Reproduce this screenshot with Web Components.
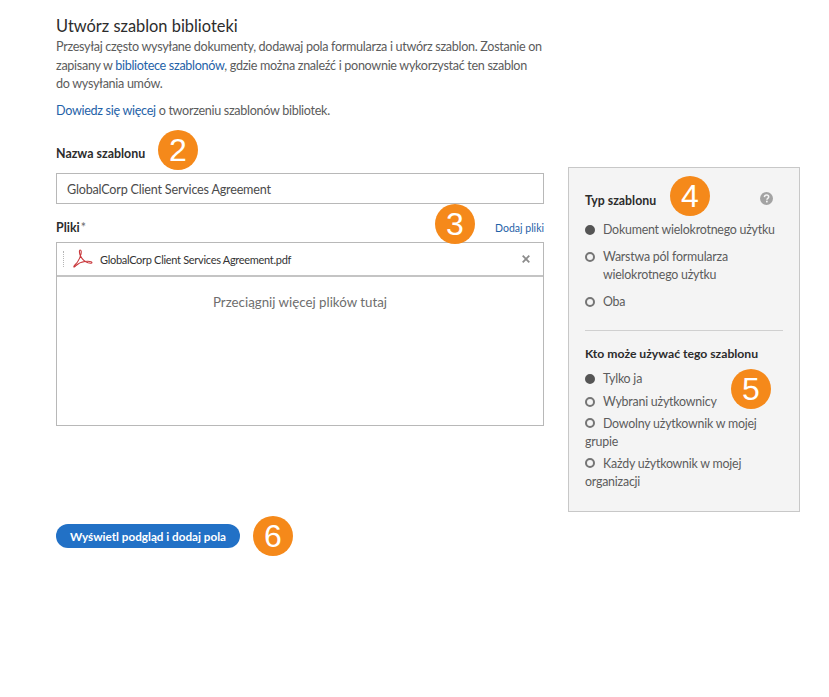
<!DOCTYPE html>
<html lang="pl">
<head>
<meta charset="utf-8">
<title>Utwórz szablon biblioteki</title>
<style>
    html, body { margin: 0; background: #fff; }
    body { font-family: Lato, "Open Sans", sans-serif; color: #4b4b4b; width: 829px; height: 697px; overflow: hidden; }
</style>
</head>
<body>
<tpl-page>
    <tpl-intro></tpl-intro>
    <tpl-field label="Nazwa szablonu">
        <tpl-input value="GlobalCorp Client Services Agreement"></tpl-input>
    </tpl-field>
    <tpl-files></tpl-files>
    <tpl-button>Wyświetl podgląd i dodaj pola</tpl-button>

    <tpl-panel slot="side">
        <tpl-radio-group title="Typ szablonu" help>
            <tpl-radio checked>Dokument wielokrotnego użytku</tpl-radio>
            <tpl-radio>Warstwa pól formularza<br>wielokrotnego użytku</tpl-radio>
            <tpl-radio>Oba</tpl-radio>
        </tpl-radio-group>
        <tpl-radio-group title="Kto może używać tego szablonu" compact>
            <tpl-radio checked>Tylko ja</tpl-radio>
            <tpl-radio>Wybrani użytkownicy</tpl-radio>
            <tpl-radio wrap>Dowolny użytkownik w mojej grupie</tpl-radio>
            <tpl-radio wrap>Każdy użytkownik w mojej organizacji</tpl-radio>
        </tpl-radio-group>
    </tpl-panel>

    <tpl-badge slot="over" x="158" y="130">2</tpl-badge>
    <tpl-badge slot="over" x="435" y="204">3</tpl-badge>
    <tpl-badge slot="over" x="670" y="176">4</tpl-badge>
    <tpl-badge slot="over" x="731" y="369">5</tpl-badge>
    <tpl-badge slot="over" x="253" y="516">6</tpl-badge>
</tpl-page>

<script>
class TplPage extends HTMLElement {
    constructor() {
        super();
        this.attachShadow({ mode: "open" });
        this.shadowRoot.innerHTML = `
            <style>
                :host {
                    display: flex;
                    position: relative;
                    align-items: flex-start;
                    gap: 24px;
                    padding: 16px 0 0 56px;
                }
                .main { display: block; width: 488px; flex: none; }
                .side { display: block; width: 232px; flex: none; margin-top: 151px; }
            </style>
            <div class="main"><slot></slot></div>
            <div class="side"><slot name="side"></slot></div>
            <slot name="over"></slot>
        `;
    }
}

class TplIntro extends HTMLElement {
    constructor() {
        super();
        this.attachShadow({ mode: "open" });
        this.shadowRoot.innerHTML = `
            <style>
                :host { display: block; font-size: 12.6px; line-height: 18.5px; letter-spacing: -0.31px; white-space: nowrap; color: #5c5c5c; }
                h1 { margin: 0 0 2px; font-size: 16.4px; line-height: 20px; font-weight: 400; letter-spacing: 0; color: #2c2c2c; }
                p { margin: 0; }
                p + p { margin-top: 8px; }
                a { color: #1f62a8; text-decoration: none; }
            </style>
            <h1>Utwórz szablon biblioteki</h1>
            <p>Przesyłaj często wysyłane dokumenty, dodawaj pola formularza i utwórz szablon. Zostanie on<br>zapisany w <a>bibliotece szablonów</a>, gdzie można znaleźć i ponownie wykorzystać ten szablon<br>do wysyłania umów.</p>
            <p><a>Dowiedz się więcej</a> o tworzeniu szablonów bibliotek.</p>
        `;
    }
}

class TplField extends HTMLElement {
    constructor() {
        super();
        this.attachShadow({ mode: "open" });
        this.shadowRoot.innerHTML = `
            <style>
                :host { display: block; margin-top: 25px; }
                label { display: block; font-size: 12.4px; line-height: 18px; font-weight: 700; color: #2c2c2c; margin-bottom: 10px; }
            </style>
            <label></label>
            <slot></slot>
        `;
    }

    connectedCallback() {
        this.shadowRoot.querySelector("label").textContent = this.getAttribute("label");
    }
}

class TplInput extends HTMLElement {
    constructor() {
        super();
        this.attachShadow({ mode: "open" });
        this.shadowRoot.innerHTML = `
            <style>
                :host { display: block; }
                div {
                    box-sizing: border-box;
                    height: 31px;
                    padding: 2px 10px 0;
                    border: 1px solid #b8b8b8;
                    font-size: 12.6px;
                    letter-spacing: -0.2px;
                    line-height: 27px;
                    color: #4b4b4b;
                }
            </style>
            <div></div>
        `;
    }

    connectedCallback() {
        this.shadowRoot.querySelector("div").textContent = this.getAttribute("value");
    }
}

class TplFiles extends HTMLElement {
    constructor() {
        super();
        this.attachShadow({ mode: "open" });
        this.shadowRoot.innerHTML = `
            <style>
                :host { display: block; margin-top: 15px; }
                .head { display: flex; justify-content: space-between; align-items: baseline; height: 23px; line-height: 18px; }
                .title { font-size: 12.4px; font-weight: 700; color: #2c2c2c; }
                .title span { font-weight: 400; color: #6e6e6e; margin-left: 1px; }
                a { font-size: 10.5px; color: #1f62a8; }
                .box { border: 1px solid #b8b8b8; height: 184px; box-sizing: border-box; display: flex; flex-direction: column; }
                .row {
                    display: flex;
                    align-items: center;
                    height: 34px;
                    flex: none;
                    box-sizing: border-box;
                    border-bottom: 2px solid #c4c4c4;
                    padding: 0 13px 0 6px;
                    font-size: 11px;
                    letter-spacing: -0.3px;
                    color: #333;
                }
                .grip { width: 0; height: 16px; border-left: 1px dotted #b5b5b5; margin-right: 9px; }
                svg.pdf { width: 20px; height: 20px; margin-right: 7px; flex: none; }
                .name { flex: 1; }
                svg.close { width: 8px; height: 8px; }
                .drop { text-align: center; padding-top: 16px; font-size: 13.3px; line-height: 18px; color: #6e6e6e; }
            </style>
            <div class="head">
                <div class="title">Pliki<span>*</span></div>
                <a>Dodaj pliki</a>
            </div>
            <div class="box">
                <div class="row">
                    <div class="grip"></div>
                    <svg class="pdf" viewBox="0 0 20 20" fill="none" stroke="#c9383c" stroke-width="1.100" stroke-linecap="round" stroke-linejoin="round">
                        <path d="M7.200 1C6 1 6.200 4.500 7.800 7.500 9.300 10.400 12 12.800 15 13.800 17 14.400 19 14.400 19 13.500 19 12.500 15.500 12 12 12.500 8.500 13 5 14.500 3 16.500 2 17.700 1 18.500 .8 17.800 .6 17 3 15 4.500 13 6.300 10.500 7.500 7.500 8 5 8.500 2.500 8.200 1 7.200 1Z"/>
                    </svg>
                    <div class="name">GlobalCorp Client Services Agreement.pdf</div>
                    <svg class="close" viewBox="0 0 8 8" stroke="#8c8c8c" stroke-width="1.800"><path d="M.7.7l6.600 6.600M7.300.7L.7 7.300"/></svg>
                </div>
                <div class="drop">Przeciągnij więcej plików tutaj</div>
            </div>
        `;
    }
}

class TplButton extends HTMLElement {
    constructor() {
        super();
        this.attachShadow({ mode: "open" });
        this.shadowRoot.innerHTML = `
            <style>
                :host { display: block; margin-top: 98px; }
                button {
                    display: block;
                    width: 184px;
                    height: 24px;
                    padding: 0;
                    border: none;
                    border-radius: 12px;
                    background: #2271c6;
                    color: #fff;
                    font-family: inherit;
                    font-size: 11.7px;
                    font-weight: 700;
                }
            </style>
            <button><slot></slot></button>
        `;
    }
}

class TplPanel extends HTMLElement {
    constructor() {
        super();
        this.attachShadow({ mode: "open" });
        this.shadowRoot.innerHTML = `
            <style>
                :host {
                    display: block;
                    box-sizing: border-box;
                    height: 345px;
                    padding: 24px 16px 0;
                    background: #f4f4f4;
                    border: 1px solid #c8c8c8;
                }
                ::slotted(tpl-radio-group:first-child) {
                    padding-bottom: 19px;
                    border-bottom: 1px solid #d0d0d0;
                    margin-bottom: 14px;
                }
            </style>
            <slot></slot>
        `;
    }
}

class TplRadioGroup extends HTMLElement {
    constructor() {
        super();
        this.attachShadow({ mode: "open" });
        this.shadowRoot.innerHTML = `
            <style>
                :host { display: block; }
                .head { display: flex; justify-content: space-between; align-items: center; height: 18px; padding-right: 10px; margin-bottom: 11px; }
                h2 { margin: 0; font-size: 12.3px; line-height: 18px; font-weight: 700; color: #2c2c2c; }
                svg { width: 13px; height: 13px; margin-top: -6px; }
                .list { display: flex; flex-direction: column; gap: 8px; }
                :host([compact]) .head { margin-bottom: 7px; }
                :host([compact]) h2 { font-size: 12.2px; }
                :host([compact]) .list { gap: 4px; }
            </style>
            <div class="head">
                <h2></h2>
            </div>
            <div class="list"><slot></slot></div>
        `;
    }

    connectedCallback() {
        this.shadowRoot.querySelector("h2").textContent = this.getAttribute("title");
        this.removeAttribute("title");
        if (this.hasAttribute("help")) {
            this.shadowRoot.querySelector(".head").insertAdjacentHTML("beforeend", `
                <svg viewBox="0 0 13 13">
                    <circle cx="6.500" cy="6.500" r="6.500" fill="#a3a3a3"/>
                    <path d="M4.400 5.100C4.500 3.800 5.400 3.100 6.600 3.100 7.800 3.100 8.700 3.800 8.700 4.900 8.700 6.300 6.900 6.300 6.900 7.700" fill="none" stroke="#f4f4f4" stroke-width="1.500"/>
                    <rect x="6" y="8.700" width="1.700" height="1.700" fill="#f4f4f4"/>
                </svg>`);
        }
    }
}

class TplRadio extends HTMLElement {
    constructor() {
        super();
        this.attachShadow({ mode: "open" });
        this.shadowRoot.innerHTML = `
            <style>
                :host { display: flex; gap: 8px; font-size: 12.4px; letter-spacing: -0.22px; line-height: 18.500px; color: #5c5c5c; }
                i {
                    flex: none;
                    box-sizing: border-box;
                    width: 10px;
                    height: 10px;
                    margin-top: 4px;
                    border: 2px solid #757575;
                    border-radius: 50%;
                }
                :host([checked]) i { background: #555; border-color: #555; }
                :host([wrap]) { display: block; line-height: 18px; }
                :host([wrap]) i { display: inline-block; margin: 0 8px 0 0; }
            </style>
            <i></i><span><slot></slot></span>
        `;
    }
}

class TplBadge extends HTMLElement {
    constructor() {
        super();
        this.attachShadow({ mode: "open" });
        this.shadowRoot.innerHTML = `
            <style>
                :host {
                    position: absolute;
                    width: 40px;
                    height: 40px;
                    border-radius: 50%;
                    background: #f5891a;
                    color: #fff;
                    font-family: "Liberation Sans", Arial, sans-serif;
                    font-size: 32px;
                    line-height: 40px;
                    text-align: center;
                }
            </style>
            <slot></slot>
        `;
    }

    connectedCallback() {
        this.style.left = this.getAttribute("x") + "px";
        this.style.top = this.getAttribute("y") + "px";
    }
}

customElements.define("tpl-page", TplPage);
customElements.define("tpl-intro", TplIntro);
customElements.define("tpl-field", TplField);
customElements.define("tpl-input", TplInput);
customElements.define("tpl-files", TplFiles);
customElements.define("tpl-button", TplButton);
customElements.define("tpl-panel", TplPanel);
customElements.define("tpl-radio-group", TplRadioGroup);
customElements.define("tpl-radio", TplRadio);
customElements.define("tpl-badge", TplBadge);
</script>
</body>
</html>
